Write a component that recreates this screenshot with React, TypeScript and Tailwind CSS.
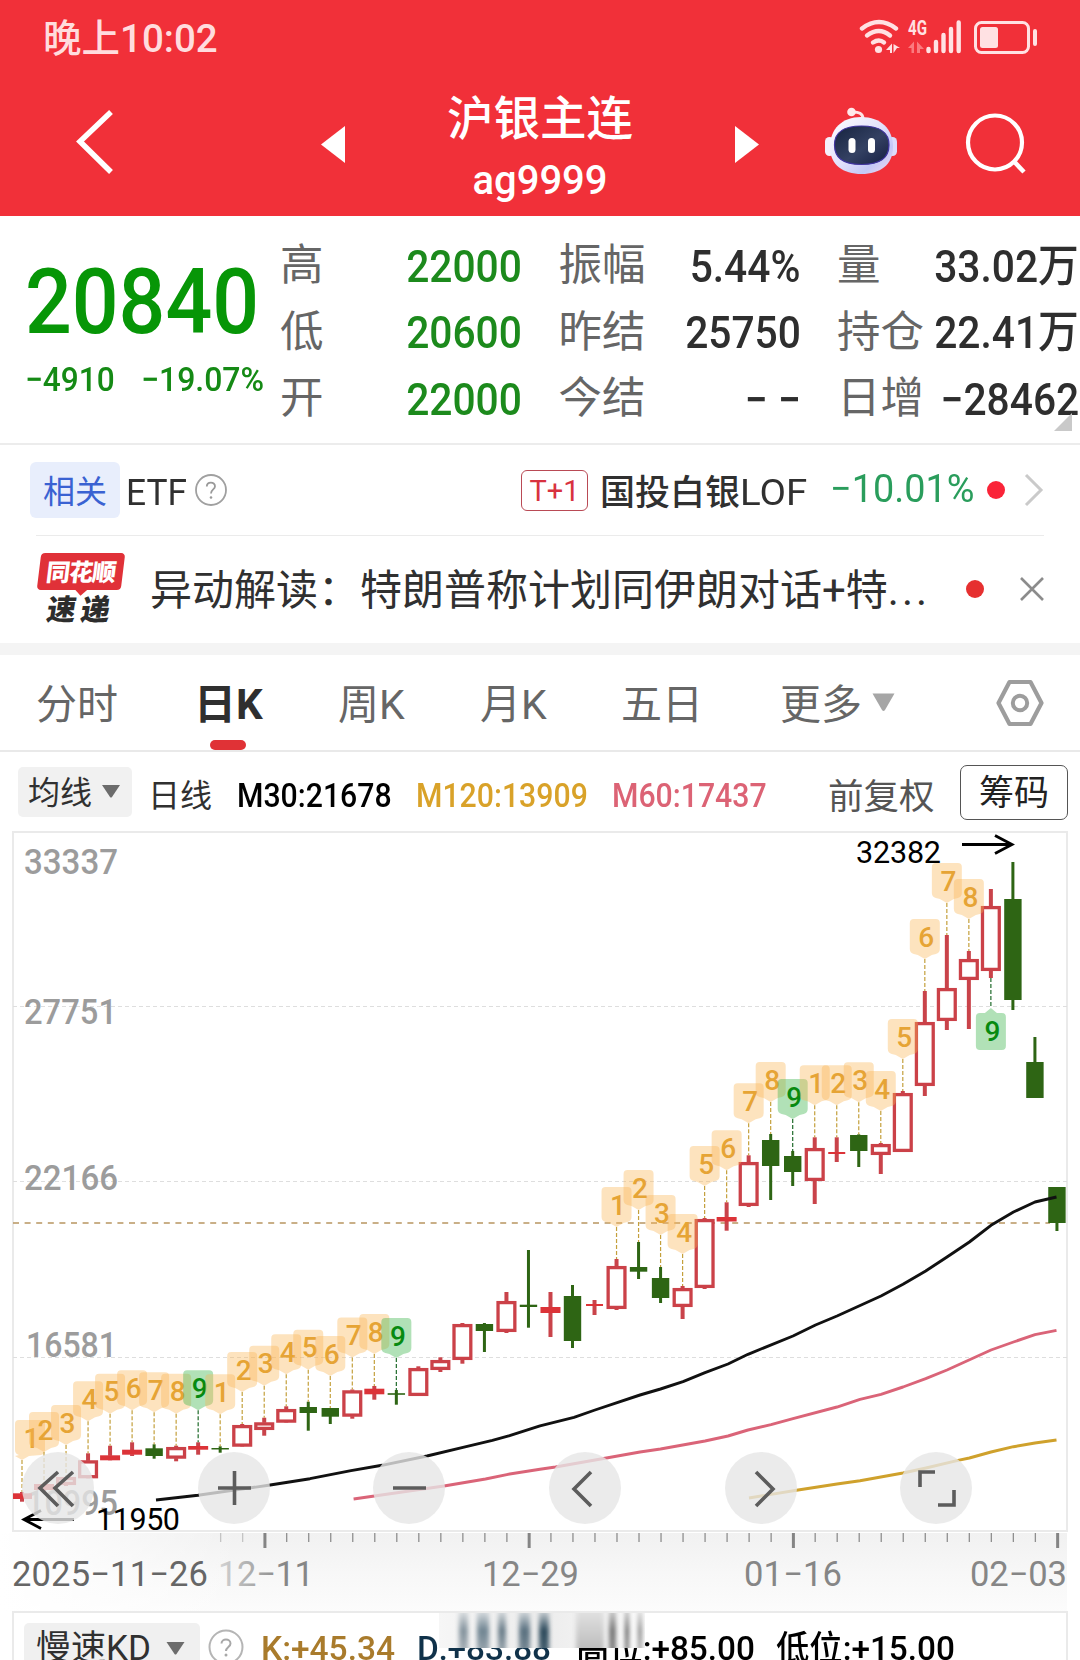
import React from "react";

type Candle = { up: boolean; hi: number; top: number; bot: number; lo: number };
type Badge = { i: number; n: number; green?: boolean; below?: boolean };

const X0 = 22;
const STEP = 22.02;
const xAt = (i: number) => X0 + STEP * i;

const rows: [string, number, number, number, number][] = [
  ["r", 1492, 1493.3, 1499, 1501.7],
  ["r", 1484, 1484, 1490, 1491],
  ["r", 1477, 1477, 1485, 1486],
  ["r", 1453.3, 1460.3, 1478.3, 1478.3],
  ["r", 1445.7, 1455.3, 1460.3, 1460.3],
  ["r", 1442.3, 1449.7, 1454.7, 1456],
  ["g", 1444.3, 1448.3, 1456, 1458.7],
  ["r", 1445.7, 1447, 1458.7, 1461.3],
  ["r", 1442.3, 1446, 1449.7, 1454.7],
  ["g", 1446.3, 1448, 1449.5, 1452.7],
  ["r", 1424, 1425, 1446.7, 1446.7],
  ["r", 1417.7, 1422.3, 1430, 1435.7],
  ["r", 1406.3, 1409, 1422.7, 1422.7],
  ["g", 1401.7, 1407, 1413, 1430.7],
  ["g", 1408, 1408, 1416.7, 1424],
  ["r", 1389.5, 1390.3, 1416.7, 1418.7],
  ["r", 1386, 1388.7, 1394.3, 1399.7],
  ["g", 1390, 1393.2, 1394.8, 1404.7],
  ["r", 1366.3, 1368, 1396, 1396],
  ["r", 1357.3, 1360, 1370, 1372],
  ["r", 1323, 1324, 1360, 1363.7],
  ["g", 1323, 1324, 1331, 1352],
  ["r", 1292, 1301, 1332, 1333],
  ["g", 1250, 1304.7, 1307, 1327.7],
  ["r", 1292, 1307, 1313, 1337],
  ["g", 1285, 1296, 1341, 1348],
  ["r", 1300, 1304, 1306, 1315],
  ["r", 1259, 1266, 1309, 1310],
  ["g", 1242, 1267, 1271.7, 1279],
  ["g", 1267, 1278, 1298, 1303],
  ["r", 1286, 1288, 1307, 1319],
  ["r", 1218, 1219, 1288, 1289],
  ["r", 1202.3, 1217, 1221.5, 1230.7],
  ["r", 1155.3, 1162, 1206, 1207],
  ["g", 1134, 1140, 1166, 1200],
  ["g", 1151, 1156, 1172, 1186],
  ["r", 1137.3, 1148, 1181, 1204],
  ["r", 1137.3, 1152, 1154, 1162],
  ["g", 1134.3, 1135, 1151, 1167],
  ["r", 1143, 1144, 1155, 1174],
  ["r", 1091, 1093, 1152, 1152],
  ["r", 991, 1022, 1086, 1096],
  ["r", 935, 988, 1021, 1030],
  ["r", 951, 959, 980, 1029],
  ["r", 889, 906, 971, 978],
  ["g", 862, 899, 1000, 1010],
  ["g", 1037, 1062, 1098, 1098],
  ["g", 1187, 1187, 1223, 1231],
];
const candles: Candle[] = rows.map(([c, hi, top, bot, lo]) => ({ up: c === "r", hi, top, bot, lo }));

const badges: Badge[] = [
  ...[0, 1, 2, 3, 4, 5, 6, 7, 8].map((i) => ({ i, n: i + 1, green: i === 8 })),
  ...[9, 10, 11, 12, 13, 14, 15, 16, 17].map((i) => ({ i, n: i - 8, green: i === 17 })),
  ...[27, 28, 29, 30, 31, 32, 33, 34, 35].map((i) => ({ i, n: i - 26, green: i === 35 })),
  ...[36, 37, 38, 39, 40, 41, 42, 43, 44].map((i) => ({ i, n: i - 35, green: i === 44, below: i === 44 })),
];

const MA30 =
  "156,1500 198,1495.3 268.6,1485.3 310,1478.7 351,1470.7 382,1465.3 427,1456 463,1447.3 492.4,1440.3 509.6,1435.7 540,1425.8 574,1417.3 595,1410 640,1395 660.5,1389 683,1381.7 705,1372.7 728,1364 748,1354.3 793,1336 815.5,1325 837,1316 881,1296 903,1284.3 925.7,1271 947,1257 969.4,1242 991,1225.3 1013.5,1212 1035,1202 1056.5,1197";
const MA60 =
  "353.6,1499 444,1486 485.5,1479 508,1474.3 540,1469.3 555.5,1467 605,1458.3 640,1452 660.5,1449 705,1441 728,1436 748,1430 771,1424.7 793,1418.7 837,1407 860,1399.3 881,1394.3 903,1387 925.7,1378.7 947,1370 991,1350 1013.5,1342 1035,1334.7 1056.5,1330.3";
const MA120 =
  "749,1498 796.5,1490.3 837,1484 860,1480.7 903,1473 926,1468 958,1460.3 969.4,1458 991,1452 1013.5,1446.7 1035,1443 1056.5,1440";

function CandleMark({ c, i }: { c: Candle; i: number }) {
  const x = xAt(i);
  if (!c.up) {
    return (
      <g fill="#2e6514">
        <rect x={x - 1.5} y={c.hi} width={3} height={c.lo - c.hi} />
        <rect x={x - 8.7} y={c.top} width={17.4} height={c.bot - c.top} />
      </g>
    );
  }
  const h = c.bot - c.top;
  const hollow = h > 7;
  const w = h < 3 ? 17 : 20;
  return (
    <g>
      <rect x={x - 2} y={c.hi} width={4} height={Math.max(0, c.top - c.hi + 0.5)} fill="#c9434a" />
      <rect x={x - 2} y={c.bot - 0.5} width={4} height={c.lo - c.bot + 0.5} fill="#c9434a" />
      {hollow ? (
        <rect x={x - w / 2 + 1.6} y={c.top + 1.6} width={w - 3.2} height={h - 3.2} fill="#fff" stroke="#cb4148" strokeWidth={3.3} />
      ) : (
        <rect x={x - w / 2} y={c.top} width={w} height={h} fill="#dc3338" />
      )}
    </g>
  );
}

function BadgeMark({ b }: { b: Badge }) {
  const c = candles[b.i];
  const x = xAt(b.i);
  const cx = b.i === 0 ? x + 8 : x;
  const fill = b.green ? "#3cb44b" : "#f9b555";
  const line = b.green ? "#1f6b2a" : "#c4a03c";
  const L = cx - 15;
  const R = cx + 15;
  let d: string;
  let ty: number;
  let y1: number;
  let y2: number;
  if (b.below) {
    const t = c.lo + 30;
    d = `M${x},${t} l6,5 H${R - 4} q4,0 4,4 V${t + 38} q0,4 -4,4 H${L + 4} q-4,0 -4,-4 V${t + 9} q0,-4 4,-4 H${x - 6} Z`;
    ty = t + 32.5;
    y1 = c.lo;
    y2 = t;
  } else {
    const t = c.hi - 72;
    d = `M${L + 4},${t} H${R - 4} q4,0 4,4 V${t + 30} q0,4 -4,5 L${x + 7},${t + 36} L${x},${t + 40} L${x - 7},${t + 36} L${L + 4},${t + 35} q-4,-1 -4,-5 V${t + 4} q0,-4 4,-4 Z`;
    ty = t + 27.5;
    y1 = t + 40;
    y2 = c.hi;
  }
  return (
    <g>
      <line x1={x} x2={x} y1={y1} y2={y2} stroke={line} strokeWidth={1.2} strokeDasharray="4 2" />
      <path d={d} fill={fill} opacity={b.green ? 0.4 : 0.38} />
      <text x={cx + 1.5} y={ty} textAnchor="middle" fontSize={28} fontWeight={500} fill={b.green ? "#078a10" : "#e6a435"}>
        {b.n}
      </text>
    </g>
  );
}

function Chart() {
  return (
    <svg className="block h-[780px] w-[1080px] font-['Roboto',sans-serif]" viewBox="0 831 1080 780">
      <defs>
        <linearGradient id="axis" x1="0" y1="0" x2="0" y2="1">
          <stop offset="0" stopColor="#f1f1f1" />
          <stop offset="0.5" stopColor="#f7f7f7" />
          <stop offset="1" stopColor="#fcfcfc" />
        </linearGradient>
        <linearGradient id="fadeBg" x1="0" y1="0" x2="1" y2="0">
          <stop offset="0" stopColor="#fff" />
          <stop offset="1" stopColor="#fff" stopOpacity="0" />
        </linearGradient>
        <linearGradient id="fadeText" gradientUnits="userSpaceOnUse" x1="218" y1="0" x2="285" y2="0">
          <stop offset="0" stopColor="#d4d4d4" />
          <stop offset="1" stopColor="#868686" />
        </linearGradient>
        <clipPath id="plot">
          <rect x="13" y="831" width="1055" height="700" />
        </clipPath>
      </defs>
      <rect x="0" y="1533" width="1067" height="79" fill="url(#axis)" />
      <rect x="0" y="1533" width="240" height="79" fill="url(#fadeBg)" />
      <rect x="13" y="832" width="1054" height="699" fill="#fff" stroke="#eaeaea" strokeWidth="2" />
      {[1006.5, 1181.5, 1357.5].map((y) => (
        <line key={y} x1="13" x2="1067" y1={y} y2={y} stroke="#dedede" strokeWidth="1.2" strokeDasharray="4 3" />
      ))}
      <line x1="13" x2="1050" y1="1223" y2="1223" stroke="#b89560" strokeWidth="1.6" strokeDasharray="6 5.6" />
      <g fill="#9c9c9c" fontSize="34.5" fontWeight="500">
        <text x="24" y="874" textLength="94" lengthAdjust="spacingAndGlyphs">33337</text>
        <text x="24" y="1024" textLength="93" lengthAdjust="spacingAndGlyphs">27751</text>
        <text x="24" y="1190" textLength="94" lengthAdjust="spacingAndGlyphs">22166</text>
        <text x="26" y="1357" textLength="91" lengthAdjust="spacingAndGlyphs">16581</text>
        <text x="26" y="1515" textLength="92" lengthAdjust="spacingAndGlyphs">10995</text>
      </g>
      <g clipPath="url(#plot)">
        {candles.map((c, i) => (
          <CandleMark key={i} c={c} i={i} />
        ))}
        {badges.map((b) => (
          <BadgeMark key={b.i} b={b} />
        ))}
      </g>
      <g fill="none" strokeWidth="2.9" strokeLinejoin="round">
        <polyline points={MA30} stroke="#111" />
        <polyline points={MA60} stroke="#da6478" />
        <polyline points={MA120} stroke="#cfa12c" />
      </g>
      <g fill="none" stroke="#000" strokeWidth="2.8">
        <path d="M962,844.5 H1012 M995,835.5 L1012,844.5 L995,853.5" />
        <path d="M74,1519.5 H24 M41,1510.5 L24,1519.5 L41,1528.5" />
      </g>
      <g fill="#000" fontSize="30.5">
        <text x="856" y="863" textLength="85">32382</text>
        <text x="96" y="1529.5" textLength="84">11950</text>
      </g>
      {candles.map((_, i) => {
        if (i < 9) return null;
        const major = (i - 11) % 12 === 0;
        return (
          <rect
            key={i}
            x={xAt(i) - (major ? 0.8 : 0.2)}
            y={1533}
            width={major ? 3 : 1.3}
            height={major ? 15 : 9}
            fill={major ? "#858585" : i < 11 ? "#c4c4c4" : "#8f8f8f"}
          />
        );
      })}
      <g fontSize="34.5" fill="#868686">
        <text x="12" y="1586" fill="#666" textLength="196" lengthAdjust="spacing">2025−11−26</text>
        <text x="218" y="1586" fill="url(#fadeText)" textLength="96" lengthAdjust="spacing">12−11</text>
        <text x="482" y="1586" textLength="97" lengthAdjust="spacing">12−29</text>
        <text x="744" y="1586" textLength="98" lengthAdjust="spacing">01−16</text>
        <text x="970" y="1586" textLength="97" lengthAdjust="spacing">02−03</text>
      </g>
    </svg>
  );
}

const toolIcons = [
  "M36,20 L18,36 L36,54 M51,20 L33,36 L51,54",
  "M20,36 H53 M36.5,19 V53",
  "M20,36 H53",
  "M42,20 L25,37 L42,54",
  "M31,20 L48,37 L31,54",
  "M20,35 V20 H35 M54,38 V53 H38",
];

function StatusIcons() {
  return (
    <svg className="block h-[40px] w-[182px]" viewBox="858 16 182 40">
      <g fill="none" stroke="#ffe1e3" strokeLinecap="round" strokeWidth="4.4">
        <path d="M862 27.5 Q879 14.5 896 27.5" />
        <path d="M867 34.5 Q879 25.5 890 34.5" />
        <path d="M873 41.5 Q879 37.5 884 41.5" />
      </g>
      <circle cx="878.5" cy="48.5" r="3.6" fill="#ffe1e3" />
      <path d="M886 49 L892 42.5 V52 H890 V49Z M893.5 43 L900 47 H897 L893.5 52Z" fill="#ffe1e3" />
      <text x="908" y="34" fontSize="20" fontWeight="700" fill="#ffe1e3" textLength="19" lengthAdjust="spacingAndGlyphs" className="font-['Roboto',sans-serif]">
        4G
      </text>
      <path d="M908 47 L914 40.500 V52 H911.500 V47Z M917 40.500 L924 48 H920 V52 H917Z" fill="#fb7a7f" />
      <g stroke="#ffe1e3" strokeWidth="4.4" strokeLinecap="round">
        <path d="M928.500 48V50 M936 41V50 M943.500 34V50 M951 28V50 M958.700 21.500V50" />
      </g>
      <rect x="975.500" y="21.500" width="53" height="30" rx="6" fill="none" stroke="#ffe1e3" strokeWidth="3" />
      <rect x="980" y="26" width="18" height="21" rx="2.500" fill="#ffe1e3" />
      <rect x="1033" y="28" width="4" height="17" rx="2" fill="#ffe1e3" />
    </svg>
  );
}

function Robot() {
  return (
    <svg className="block h-[68px] w-[73px]" viewBox="0 0 73 68">
      <defs>
        <linearGradient id="shell" x1="0" y1="0" x2="1" y2="1">
          <stop offset="0" stopColor="#fff" />
          <stop offset="0.5" stopColor="#e2e0fb" />
          <stop offset="0.75" stopColor="#c3c8f6" />
          <stop offset="1" stopColor="#f6d9ee" />
        </linearGradient>
        <linearGradient id="visor" x1="0" y1="0" x2="1" y2="1">
          <stop offset="0" stopColor="#16233f" />
          <stop offset="0.55" stopColor="#344163" />
          <stop offset="1" stopColor="#151e42" />
        </linearGradient>
      </defs>
      <path d="M26 5 Q38 4 38 12" fill="none" stroke="#ffe4e6" strokeWidth="3" />
      <circle cx="26.500" cy="5" r="4.300" fill="#ffe9ea" />
      <rect x="0" y="30" width="9" height="19" rx="4.500" fill="#f5f0fb" />
      <rect x="63" y="30" width="9" height="19" rx="4.500" fill="#dcdcfa" />
      <path d="M36 10 C56 10 68 22 68 40 C68 58 55 67 36.500 67 C18 67 5 58 5 40 C5 22 17 10 36 10Z" fill="url(#shell)" />
      <path d="M36.500 19 C56 19 64 26 64 38 C64 50 57 57.500 36.500 57.500 C17 57.500 9.500 50 9.500 38 C9.500 26 18 19 36.500 19Z" fill="url(#visor)" stroke="#4034a0" strokeWidth="1.200" />
      <rect x="23.500" y="31" width="7" height="15" rx="3.500" fill="#fff" />
      <rect x="43" y="31" width="7" height="15" rx="3.500" fill="#fff" />
    </svg>
  );
}

function Header() {
  return (
    <header className="h-[216px] bg-[#f13039] text-white">
      <div className="flex h-[74px] items-center justify-between pr-[40px] pl-[43px]">
        <span className="mt-[4px] text-[38.500px] leading-none font-medium text-[#ffdcde]">晚上10:02</span>
        <StatusIcons />
      </div>
      <div className="flex h-[142px]">
        <svg className="mt-[33px] ml-[75px] block h-[70px] w-[42px] shrink-0" viewBox="0 0 42 70">
          <path d="M36 5 L5 34.500 L36 65" fill="none" stroke="#fff" strokeWidth="5.500" />
        </svg>
        <svg className="mt-[52px] ml-[204px] block h-[37px] w-[24px] shrink-0" viewBox="0 0 24 37">
          <path d="M0 18.500 L24 0 V37Z" fill="#fff" />
        </svg>
        <div className="flex w-[390px] flex-col items-center">
          <div className="mt-[22px] text-[46.500px] leading-none font-medium">沪银主连</div>
          <div className="mt-[18px] text-[40px] leading-none font-medium">ag9999</div>
        </div>
        <svg className="mt-[52px] block h-[37px] w-[24px] shrink-0" viewBox="0 0 24 37">
          <path d="M24 18.500 L0 0 V37Z" fill="#fff" />
        </svg>
        <div className="mt-[33px] ml-[66px]">
          <Robot />
        </div>
        <svg className="mt-[36px] ml-[65px] block h-[66px] w-[66px] shrink-0" viewBox="0 0 66 66">
          <circle cx="32" cy="32.500" r="27" fill="none" stroke="#fff" strokeWidth="4.200" />
          <path d="M50.500 51 L61 62" stroke="#fff" strokeWidth="4.500" />
        </svg>
      </div>
    </header>
  );
}

function QuoteColumn({ items, tone }: { items: [string, string][]; tone: string }) {
  return (
    <div className="flex h-[206px] w-[241px] shrink-0 flex-col justify-between pt-[27px]">
      {items.map(([k, v]) => (
        <div key={k} className="flex h-[46px] items-center justify-between whitespace-nowrap">
          <span className="-ml-px text-[43.500px] leading-none text-[#666]">{k}</span>
          <span className={`-ml-[24px] origin-right scale-x-[0.905] text-[45px] leading-none font-medium ${tone}`}>{v}</span>
        </div>
      ))}
    </div>
  );
}

function Quote() {
  return (
    <section className="relative flex h-[229px] border-b-2 border-[#ececec] bg-white">
      <div className="w-[281px] shrink-0 pt-[41px] pl-[25px] text-[#079607]">
        <div className="origin-left scale-x-[0.905] text-[91px] leading-[90px] font-medium">20840</div>
        <div className="mt-[15px] flex text-[34px] leading-[34px] font-medium text-[#158a15]">
          <span className="w-[116px] origin-left scale-x-[0.930]">−4910</span>
          <span className="origin-left scale-x-[0.940]">−19.07%</span>
        </div>
      </div>
      <div className="flex gap-[37.500px]">
        <QuoteColumn tone="text-[#1c8a1c]" items={[["高", "22000"], ["低", "20600"], ["开", "22000"]]} />
        <QuoteColumn tone="text-[#2e2e2e]" items={[["振幅", "5.44%"], ["昨结", "25750"], ["今结", "− −"]]} />
        <QuoteColumn tone="text-[#2e2e2e]" items={[["量", "33.02万"], ["持仓", "22.41万"], ["日增", "−28462"]]} />
      </div>
      <svg className="absolute top-[197px] left-[1054px] h-[18px] w-[18px]" viewBox="0 0 18 18">
        <path d="M18 0 V18 H0Z" fill="#c9c9c9" />
      </svg>
    </section>
  );
}

function EtfRow() {
  return (
    <section className="flex h-[90px] items-center bg-white pl-[30px]">
      <span className="flex h-[56px] w-[90px] items-center justify-center rounded-[6px] bg-[#e8eefc] pt-[3px] text-[32px] leading-none text-[#3a62d2]">相关</span>
      <span className="mt-[5px] ml-[6px] w-[68px] origin-left scale-x-[0.980] text-[36px] leading-none text-[#303030]">ETF</span>
      <svg className="h-[34px] w-[34px]" viewBox="0 0 34 34">
        <circle cx="17" cy="17" r="15" fill="none" stroke="#a0a0a0" strokeWidth="1.800" />
        <path d="M12.800 13.500 C12.800 8.300 21 8.300 21 13.300 C21 16.500 17 16.500 17 20.500" fill="none" stroke="#999" strokeWidth="1.800" />
        <circle cx="17" cy="24.500" r="1.300" fill="#999" />
      </svg>
      <span className="ml-[293px] flex h-[41px] w-[67px] items-center justify-center rounded-[6px] border-[1.500px] border-[#b94a55] pt-[2px] text-[29px] leading-none text-[#d8323f]">T+1</span>
      <span className="mt-[5px] ml-[12px] w-[230px] text-[35px] leading-none font-medium whitespace-nowrap text-[#303030]">
        国投白银<span className="inline-block origin-left scale-x-[1.040] text-[37px] leading-none font-normal">LOF</span>
      </span>
      <span className="mb-[2px] w-[157px] origin-left scale-x-[0.970] text-[39px] leading-none text-[#2a9d5c]">−10.01%</span>
      <span className="h-[18px] w-[18px] rounded-full bg-[#fa2438]" />
      <svg className="ml-[18px] h-[36px] w-[22px]" viewBox="0 0 22 36">
        <path d="M3 3 L18 18 L3 33" fill="none" stroke="#cacaca" strokeWidth="3" />
      </svg>
    </section>
  );
}

function NewsRow() {
  return (
    <section className="bg-white">
      <div className="mx-[36px] h-[1px] bg-[#ebebeb]" />
      <div className="flex h-[107px] items-center pl-[36px] pb-[2px]">
        <div className="flex h-[72px] w-[90px] shrink-0 flex-col items-center">
          <div className="relative flex h-[38px] w-[84px] -skew-x-[7deg] items-center justify-center rounded-[4px] bg-[#e03138] pt-[2px] text-[24px] leading-none font-black tracking-[-1px] text-white">
            同花顺
            <span className="absolute -bottom-[4px] left-[40px] h-[9px] w-[9px] rotate-45 bg-[#e03138]" />
          </div>
          <div className="mt-[6px] -skew-x-[9deg] text-[29px] leading-none font-black tracking-[5px] text-[#2d2d2d]">速递</div>
        </div>
        <div className="mt-[5px] ml-[24px] w-[816px] text-[42px] leading-[50px] whitespace-nowrap text-[#303030]">
          异动解读：特朗普称计划同伊朗对话+特<span className="tracking-[3px]">...</span>
        </div>
        <span className="h-[18px] w-[18px] rounded-full bg-[#e63030]" />
        <svg className="ml-[34px] h-[28px] w-[28px]" viewBox="0 0 28 28">
          <path d="M3 3 L25 25 M25 3 L3 25" stroke="#8c8c8c" strokeWidth="2.600" />
        </svg>
      </div>
    </section>
  );
}

function Tabs() {
  return (
    <nav className="flex h-[97px] items-center border-b-2 border-[#e9e9e9] bg-white text-[41px] leading-none text-[#666]">
      <span className="mt-[5px] ml-[36px] w-[158px]">分时</span>
      <span className="relative mt-[5px] w-[144px] text-[42px] font-bold text-[#2f2f2f]">
        日K
        <span className="absolute top-[56px] left-[16px] h-[10px] w-[36px] rounded-full bg-[#e03236]" />
      </span>
      <span className="mt-[5px] w-[142px]">周K</span>
      <span className="mt-[5px] w-[141px]">月K</span>
      <span className="mt-[5px] w-[159px]">五日</span>
      <span className="mt-[5px] w-[92px]">更多</span>
      <svg className="h-[19px] w-[23px]" viewBox="0 0 23 19">
        <path d="M0.500 0.500 H22.500 L13 17 Q11.500 19 10 17Z" fill="#a6a6a6" />
      </svg>
      <svg className="ml-[99px] h-[52px] w-[52px]" viewBox="0 0 52 52">
        <path d="M15.500 5 H36.500 L47.500 26 L36.500 47 H15.500 L4.500 26Z" fill="none" stroke="#9d9d9d" strokeWidth="4.200" strokeLinejoin="round" />
        <circle cx="26" cy="26" r="7.200" fill="none" stroke="#9d9d9d" strokeWidth="4" />
      </svg>
    </nav>
  );
}

function MaRow() {
  const num = "origin-left text-[32.500px] font-medium scale-x-[0.930]";
  return (
    <section className="flex h-[79px] items-center bg-white leading-none whitespace-nowrap">
      <div className="ml-[18px] flex h-[50px] w-[114px] shrink-0 items-center rounded-[5px] bg-[#f1f1f1] pl-[10px] text-[32px] text-[#303030]">
        <span className="mt-[3px]">均线</span>
        <svg className="ml-[10px] h-[13px] w-[18px]" viewBox="0 0 18 13">
          <path d="M0 0 H18 L10 12 Q9 13 8 12Z" fill="#6c6c6c" />
        </svg>
      </div>
      <span className="mt-[8px] ml-[16px] w-[89px] shrink-0 text-[32px] text-[#303030]">日线</span>
      <span className="mt-[9px] w-[179px] shrink-0">
        <span className={`${num} inline-block text-black`}>M30:21678</span>
      </span>
      <span className="mt-[9px] w-[196px] shrink-0">
        <span className={`${num} inline-block text-[#d9a229]`}>M120:13909</span>
      </span>
      <span className="mt-[9px] w-[216px] shrink-0">
        <span className={`${num} inline-block text-[#dc6375]`}>M60:17437</span>
      </span>
      <span className="mt-[13px] w-[132px] shrink-0 text-[35.500px] text-[#555]">前复权</span>
      <span className="mt-[1px] flex h-[55px] w-[108px] shrink-0 items-center justify-center rounded-[7px] border-[1.500px] border-[#555] pt-[3px] text-[35px] text-[#222]">筹码</span>
    </section>
  );
}

function Indicator() {
  return (
    <section className="relative mx-[12px] flex h-[49px] border-x-2 border-t-2 border-[#eaeaea] bg-white text-[34px] leading-none whitespace-nowrap">
      <div className="mt-[10px] ml-[10px] flex h-[50px] w-[176px] shrink-0 items-center rounded-[5px] bg-[#f0f0f0] pl-[12px] text-[35px] text-[#303030]">
        <span className="w-[122px]">慢速KD</span>
        <svg className="ml-[8px] h-[13px] w-[19px]" viewBox="0 0 18 13">
          <path d="M0 0 H18 L10 12 Q9 13 8 12Z" fill="#6c6c6c" />
        </svg>
      </div>
      <svg className="mt-[16px] ml-[8px] h-[36px] w-[36px] shrink-0" viewBox="0 0 36 36">
        <circle cx="18" cy="18" r="16.500" fill="none" stroke="#b5b5b5" strokeWidth="2" />
        <path d="M13.500 14.500 C13.500 9 22.500 9 22.500 14.500 C22.500 18 18 18 18 22" fill="none" stroke="#a8a8a8" strokeWidth="2" />
        <circle cx="18" cy="26" r="1.500" fill="#a8a8a8" />
      </svg>
      <span className="mt-[18px] ml-[17px] w-[156px] shrink-0">
        <span className="inline-block origin-left scale-x-[0.985] font-medium text-[#a97b2c]">K:+45.34</span>
      </span>
      <span className="mt-[18px] w-[159px] shrink-0">
        <span className="inline-block origin-left scale-x-[0.980] font-medium text-[#10324a]">D:+83.88</span>
      </span>
      <span className="mt-[18px] w-[200px] shrink-0">
        <span className="inline-block origin-left scale-x-[0.980] font-medium text-black">高位:+85.00</span>
      </span>
      <span className="mt-[18px]">
        <span className="inline-block origin-left scale-x-[0.980] font-medium text-black">低位:+15.00</span>
      </span>
      <div className="absolute top-0 left-[425px] h-[35px] w-[206px] overflow-hidden bg-linear-to-r from-[#f6f6f6] via-[#ececec] to-[#fafafa]">
        <div className="-mt-[6px] ml-[20px] flex h-[47px] items-stretch gap-[9px] blur-[2px]">
          <span className="w-[9px] bg-linear-to-b from-[#f3f3f3] via-[#84939d] to-[#aeb6bb]" />
          <span className="w-[12px] bg-linear-to-b from-[#f3f3f3] via-[#708592] to-[#a0abb2]" />
          <span className="w-[8px] bg-linear-to-b from-[#f3f3f3] via-[#6a7d89] to-[#a0abb2]" />
          <span className="ml-[4px] w-[11px] bg-linear-to-b from-[#f3f3f3] via-[#5a7180] to-[#7d8d97]" />
          <span className="w-[10px] bg-linear-to-b from-[#f3f3f3] via-[#2f4c5d] to-[#4b6474]" />
          <span className="ml-[18px] w-[28px] bg-linear-to-b from-[#e6e6e6] to-[#b8b8b8]" />
          <span className="-ml-[4px] w-[7px] bg-linear-to-b from-[#ddd] via-[#777] to-[#888]" />
          <span className="w-[4px] bg-linear-to-b from-[#ddd] via-[#666] to-[#888]" />
          <span className="w-[4px] bg-linear-to-b from-[#eee] via-[#888] to-[#aaa]" />
        </div>
      </div>
    </section>
  );
}

export default function App() {
  return (
    <main className="h-[1660px] w-[1080px] overflow-hidden bg-white font-['Roboto','Noto_Sans_CJK_SC',sans-serif]">
      <Header />
      <Quote />
      <EtfRow />
      <NewsRow />
      <div className="h-[12px] bg-[#f4f4f4]" />
      <Tabs />
      <MaRow />
      <div className="relative">
        <Chart />
        <div className="absolute top-[621px] left-[22px] flex gap-[103.700px]">
          {toolIcons.map((d) => (
            <button key={d} className="h-[72px] w-[72px] rounded-full bg-[#e6e6e6]/80">
              <svg className="block h-[72px] w-[72px]" viewBox="0 0 72 72">
                <path d={d} fill="none" stroke="#5c5c5c" strokeWidth="3.600" />
              </svg>
            </button>
          ))}
        </div>
      </div>
      <Indicator />
    </main>
  );
}
